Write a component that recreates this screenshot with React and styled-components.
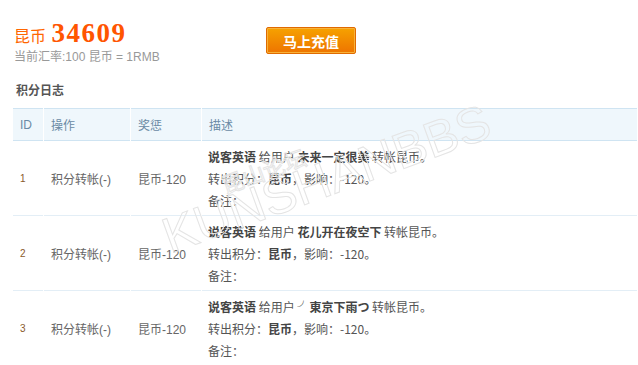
import React from 'react'
import styled, { createGlobalStyle } from 'styled-components'

const GlobalStyle = createGlobalStyle`
  body {
    margin: 0;
    background: #fff;
    font-family: "Liberation Sans", "Noto Sans CJK SC", sans-serif;
    overflow: hidden;
  }
`

const logs = [
  { id: 1, user: '未来一定很美' },
  { id: 2, user: '花儿开在夜空下' },
  { id: 3, user: '╯東京下雨つ' },
]

function App() {
  return (
    <Page>
      <GlobalStyle />
      <TopBar>
        <Balance>
          <Coin>
            昆币 <Amount>34609</Amount>
          </Coin>
          <Rate>当前汇率:100 昆币 = 1RMB</Rate>
        </Balance>
        <ChargeButton>马上充值</ChargeButton>
      </TopBar>
      <SectionTitle>积分日志</SectionTitle>
      <TableWrap>
        <LogTable>
          <thead>
            <tr>
              <Th $w={30}>ID</Th>
              <Th $w={86}>操作</Th>
              <Th $w={70}>奖惩</Th>
              <Th>描述</Th>
            </tr>
          </thead>
          <tbody>
            {logs.map((log) => (
              <tr key={log.id}>
                <IdCell>{log.id}</IdCell>
                <Td>积分转帐(-)</Td>
                <Td>昆币-120</Td>
                <DescCell>
                  <Line>
                    <b>说客英语</b> 给用户 <b>{log.user}</b> 转帐昆币。
                  </Line>
                  <Line>
                    转出积分：<b>昆币</b>，影响：-120。
                  </Line>
                  <Line>备注：</Line>
                </DescCell>
              </tr>
            ))}
          </tbody>
        </LogTable>
        <Watermark>
          <small>昆山论坛</small>KUNSHANBBS
        </Watermark>
      </TableWrap>
    </Page>
  )
}

const Page = styled.div`
  width: 638px;
  height: 365px;
  overflow: hidden;
`

const TopBar = styled.div`
  display: flex;
  align-items: center;
  padding: 19px 0 0 14px;
`

const Balance = styled.div`
  width: 252px;
`

const Coin = styled.div`
  color: #ff6600;
  font-size: 16px;
  line-height: 28px;
  font-family: "Noto Sans CJK SC", sans-serif;
`

const Amount = styled.span`
  font-family: "Liberation Serif", serif;
  font-weight: bold;
  font-size: 27px;
  letter-spacing: 1.5px;
  color: #ff5500;
  margin-left: 2px;
`

const Rate = styled.div`
  color: #999;
  font-size: 12px;
  line-height: 16px;
`

const ChargeButton = styled.button`
  width: 90px;
  height: 27px;
  margin-top: -3px;
  border: 1px solid #e06a00;
  border-radius: 2px;
  background: linear-gradient(#f6a200, #ee7400);
  box-shadow: inset 0 0 0 1px #f7b23a;
  color: #fff;
  font-weight: bold;
  font-size: 14px;
  font-family: "Noto Sans CJK SC", sans-serif;
  padding: 0;
`

const SectionTitle = styled.h3`
  margin: 17px 0 0 16px;
  font-size: 12px;
  line-height: 16px;
  color: #555;
  font-family: "Noto Sans CJK SC", sans-serif;
`

const TableWrap = styled.div`
  position: relative;
  margin: 10px 0 0 12px;
`

const LogTable = styled.table`
  width: 626px;
  border-collapse: separate;
  border-spacing: 1px 0;
  font-size: 12px;
  font-family: "Liberation Sans", "Noto Sans CJK SC", sans-serif;
`

const Th = styled.th`
  width: ${(p) => (p.$w ? `${p.$w}px` : 'auto')};
  height: 33px;
  padding: 0 0 0 7px;
  text-align: left;
  font-weight: normal;
  color: #6a8aa5;
  background: #eff7fc;
  border-top: 1px solid #cfe4f2;
  border-bottom: 1px solid #cfe4f2;
  box-sizing: border-box;
`

const Td = styled.td`
  height: 74px;
  padding: 0 0 0 7px;
  color: #666;
  border-bottom: 1px solid #e3eef6;
  box-sizing: border-box;
  vertical-align: middle;
`

const IdCell = styled(Td)`
  font-size: 10px;
  color: #8a5a2b;
`

const DescCell = styled(Td)`
  padding: 5px 0 3px 6px;
  font-family: "Noto Sans CJK SC", sans-serif;
  color: #555;
  b {
    color: #444;
  }
`

const Line = styled.div`
  line-height: 22px;
`

const Watermark = styled.div`
  position: absolute;
  left: 162px;
  top: 100px;
  transform-origin: 0 100%;
  transform: rotate(-20deg);
  font-family: "Liberation Sans", sans-serif;
  font-size: 50px;
  line-height: 56px;
  color: transparent;
  -webkit-text-stroke: 1px #e4e4e4;
  pointer-events: none;
  white-space: nowrap;
  small {
    position: absolute;
    left: 72px;
    top: -14px;
    font-size: 22px;
    line-height: 24px;
    font-family: "Noto Sans CJK SC", sans-serif;
  }
`

export default App
